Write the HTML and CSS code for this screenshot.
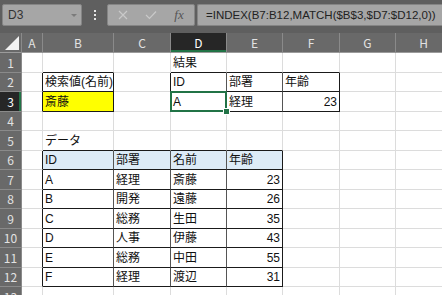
FILE: index.html
```html
<!DOCTYPE html>
<html lang="ja">
<head>
    <meta charset="UTF-8">
    <meta name="viewport" content="width=device-width, initial-scale=1.0">
    <title>INDEX MATCH</title>
    <link rel="stylesheet" href="styles.css">
</head>
<body>
    <div class="toolbar">
        <div class="name-box"><span>D3</span><span class="caret"></span></div>
        <div class="grip"><i></i><i></i><i></i></div>
        <div class="fx-box">
            <span class="slot">
                <svg width="10" height="10" viewBox="0 0 10 10"><path d="M1 1L9 9M9 1L1 9" stroke="#c9c9c9" stroke-width="1.2" fill="none"/></svg>
            </span>
            <span class="slot">
                <svg width="12" height="10" viewBox="0 0 12 10"><path d="M1 5L4.5 8.5L11 1.5" stroke="#c9c9c9" stroke-width="1.2" fill="none"/></svg>
            </span>
            <span class="slot fx">fx</span>
        </div>
        <div class="formula">=INDEX(B7:B12,MATCH($B$3,$D7:$D12,0))</div>
    </div>

    <div class="sheet-wrap">
        <table class="sheet">
            <colgroup>
                <col style="width:22px"><col style="width:21px"><col style="width:71px"><col style="width:57px">
                <col style="width:56px"><col style="width:56px"><col style="width:57px"><col style="width:56px"><col style="width:56px">
            </colgroup>
            <tr class="head">
                <th class="corner"><span class="tri"></span></th>
                <th>A</th><th>B</th><th>C</th><th class="sel-col">D</th><th>E</th><th>F</th><th>G</th><th>H</th>
            </tr>
            <tr>
                <th>1</th><td></td><td class="b"></td><td></td><td class="b">結果</td><td class="b"></td><td class="b"></td><td></td><td></td>
            </tr>
            <tr>
                <th>2</th><td class="r"></td><td class="r b">検索値(名前)</td><td class="r"></td>
                <td class="rg b">ID</td><td class="rg b">部署</td><td class="r b">年齢</td><td></td><td></td>
            </tr>
            <tr>
                <th class="sel-row">3</th><td class="r"></td><td class="r b yellow">斎藤</td><td class="r"></td>
                <td class="rg b active">A</td><td class="rg b">経理</td><td class="r b num">23</td><td></td><td></td>
            </tr>
            <tr>
                <th>4</th><td></td><td></td><td></td><td></td><td></td><td></td><td></td><td></td>
            </tr>
            <tr>
                <th>5</th><td></td><td class="b">データ</td><td class="b"></td><td class="b"></td><td class="b"></td><td></td><td></td><td></td>
            </tr>
            <tr>
                <th>6</th><td class="r"></td><td class="rg b hd">ID</td><td class="rg b hd">部署</td><td class="rg b hd">名前</td><td class="r b hd">年齢</td><td></td><td></td><td></td>
            </tr>
            <tr>
                <th>7</th><td class="r"></td><td class="rg b">A</td><td class="rg b">経理</td><td class="rg b">斎藤</td><td class="r b num">23</td><td></td><td></td><td></td>
            </tr>
            <tr>
                <th>8</th><td class="r"></td><td class="rg b">B</td><td class="rg b">開発</td><td class="rg b">遠藤</td><td class="r b num">26</td><td></td><td></td><td></td>
            </tr>
            <tr>
                <th>9</th><td class="r"></td><td class="rg b">C</td><td class="rg b">総務</td><td class="rg b">生田</td><td class="r b num">35</td><td></td><td></td><td></td>
            </tr>
            <tr>
                <th>10</th><td class="r"></td><td class="rg b">D</td><td class="rg b">人事</td><td class="rg b">伊藤</td><td class="r b num">43</td><td></td><td></td><td></td>
            </tr>
            <tr>
                <th>11</th><td class="r"></td><td class="rg b">E</td><td class="rg b">総務</td><td class="rg b">中田</td><td class="r b num">55</td><td></td><td></td><td></td>
            </tr>
            <tr>
                <th>12</th><td class="r"></td><td class="rg b">F</td><td class="rg b">経理</td><td class="rg b">渡辺</td><td class="r b num">31</td><td></td><td></td><td></td>
            </tr>
            <tr>
                <th>13</th><td></td><td></td><td></td><td></td><td></td><td></td><td></td><td></td>
            </tr>
        </table>
    </div>
</body>
</html>
```

FILE: styles.css
```css
body {
    margin: 0;
    width: 442px;
    height: 295px;
    overflow: hidden;
    background-color: #fff;
    font-family: "Liberation Sans", "Noto Sans CJK JP", sans-serif;
    font-size: 12px;
    color: #111;
}

/* formula bar */
.toolbar {
    display: flex;
    height: 33px;
    padding: 4px 0 0 2px;
    box-sizing: border-box;
    background-color: #5f5f5f;
}

.name-box {
    display: flex;
    align-items: center;
    width: 80px;
    height: 22px;
    box-sizing: border-box;
    padding-left: 5px;
    background-color: #a6a6a6;
    border: 1px solid #858585;
    border-radius: 2px;
    color: #333;
    font-size: 12px;
}

.caret {
    margin-left: auto;
    margin-right: 4px;
    border-left: 3px solid transparent;
    border-right: 3px solid transparent;
    border-top: 3px solid #7b7b7b;
}

.grip {
    width: 25px;
    display: flex;
    flex-direction: column;
    align-items: center;
    justify-content: center;
    gap: 2px;
    height: 22px;
}

.grip i {
    width: 2px;
    height: 2px;
    background-color: #e6e6e6;
}

.fx-box {
    display: flex;
    width: 88px;
    height: 22px;
    box-sizing: border-box;
    padding-left: 1px;
    background-color: #a6a6a6;
    border: 1px solid #858585;
    border-radius: 2px;
}

.slot {
    width: 28px;
    display: flex;
    align-items: center;
    justify-content: center;
}

.fx {
    font-family: "Liberation Serif", serif;
    font-style: italic;
    font-size: 13px;
    color: #555;
}

.formula {
    flex: 1;
    height: 22px;
    margin-left: 2px;
    padding-left: 8px;
    box-sizing: border-box;
    background-color: #a6a6a6;
    border: 1px solid #858585;
    border-right: none;
    border-radius: 2px 0 0 2px;
    line-height: 20px;
    font-size: 11.5px;
    color: #222;
    white-space: nowrap;
    overflow: hidden;
}

/* grid */
.sheet-wrap {
    overflow: hidden;
}

.sheet {
    width: 452px;
    table-layout: fixed;
    border-collapse: separate;
    border-spacing: 0;
}

.sheet tr {
    height: 19.5px;
}

.sheet tr.head {
    height: 20px;
}

.sheet th,
.sheet td {
    box-sizing: border-box;
    padding: 0 2px;
    white-space: nowrap;
    vertical-align: bottom;
    line-height: 18px;
}

.sheet th {
    background-color: #696969;
    color: #e2e2e2;
    font-weight: normal;
    font-family: "Noto Sans CJK JP", sans-serif;
    font-size: 12px;
    line-height: 18px;
    text-align: center;
    border-right: 1px solid #8a8a8a;
    border-bottom: 1px solid #8a8a8a;
}

.sheet .head th {
    vertical-align: middle;
    border-bottom-color: #9b9b9b;
}

.sheet th.corner {
    text-align: right;
    vertical-align: bottom;
    padding: 0 2px 2px 0;
    line-height: 0;
}

.tri {
    display: inline-block;
    border-left: 14px solid transparent;
    border-bottom: 14px solid #f2f2f2;
}

.sheet th.sel-col {
    background-color: #262626;
    color: #fff;
    box-shadow: inset 0 -2px 0 #217346;
}

.sheet th.sel-row {
    background-color: #262626;
    color: #fff;
    box-shadow: inset -2px 0 0 #217346;
}

.sheet td {
    border-right: 1px solid #dcdcdc;
    border-bottom: 1px solid #dcdcdc;
    overflow: visible;
}

.sheet td.r { border-right-color: #1a1a1a; }
.sheet td.rg { border-right-color: #555; }
.sheet td.b { border-bottom-color: #1a1a1a; }

.sheet td.num { text-align: right; }
.sheet td.hd { background-color: #ddebf7; }
.sheet td.yellow { background-color: #ffff00; }

.sheet td.active {
    position: relative;
}

.sheet td.active::after {
    content: '';
    position: absolute;
    left: -1px;
    top: -1px;
    right: -1px;
    bottom: -1px;
    border: 2px solid #217346;
}

.sheet td.active::before {
    content: '';
    position: absolute;
    right: -4px;
    bottom: -4px;
    width: 5px;
    height: 5px;
    background-color: #217346;
    border: 1px solid #fff;
    z-index: 1;
}
```
